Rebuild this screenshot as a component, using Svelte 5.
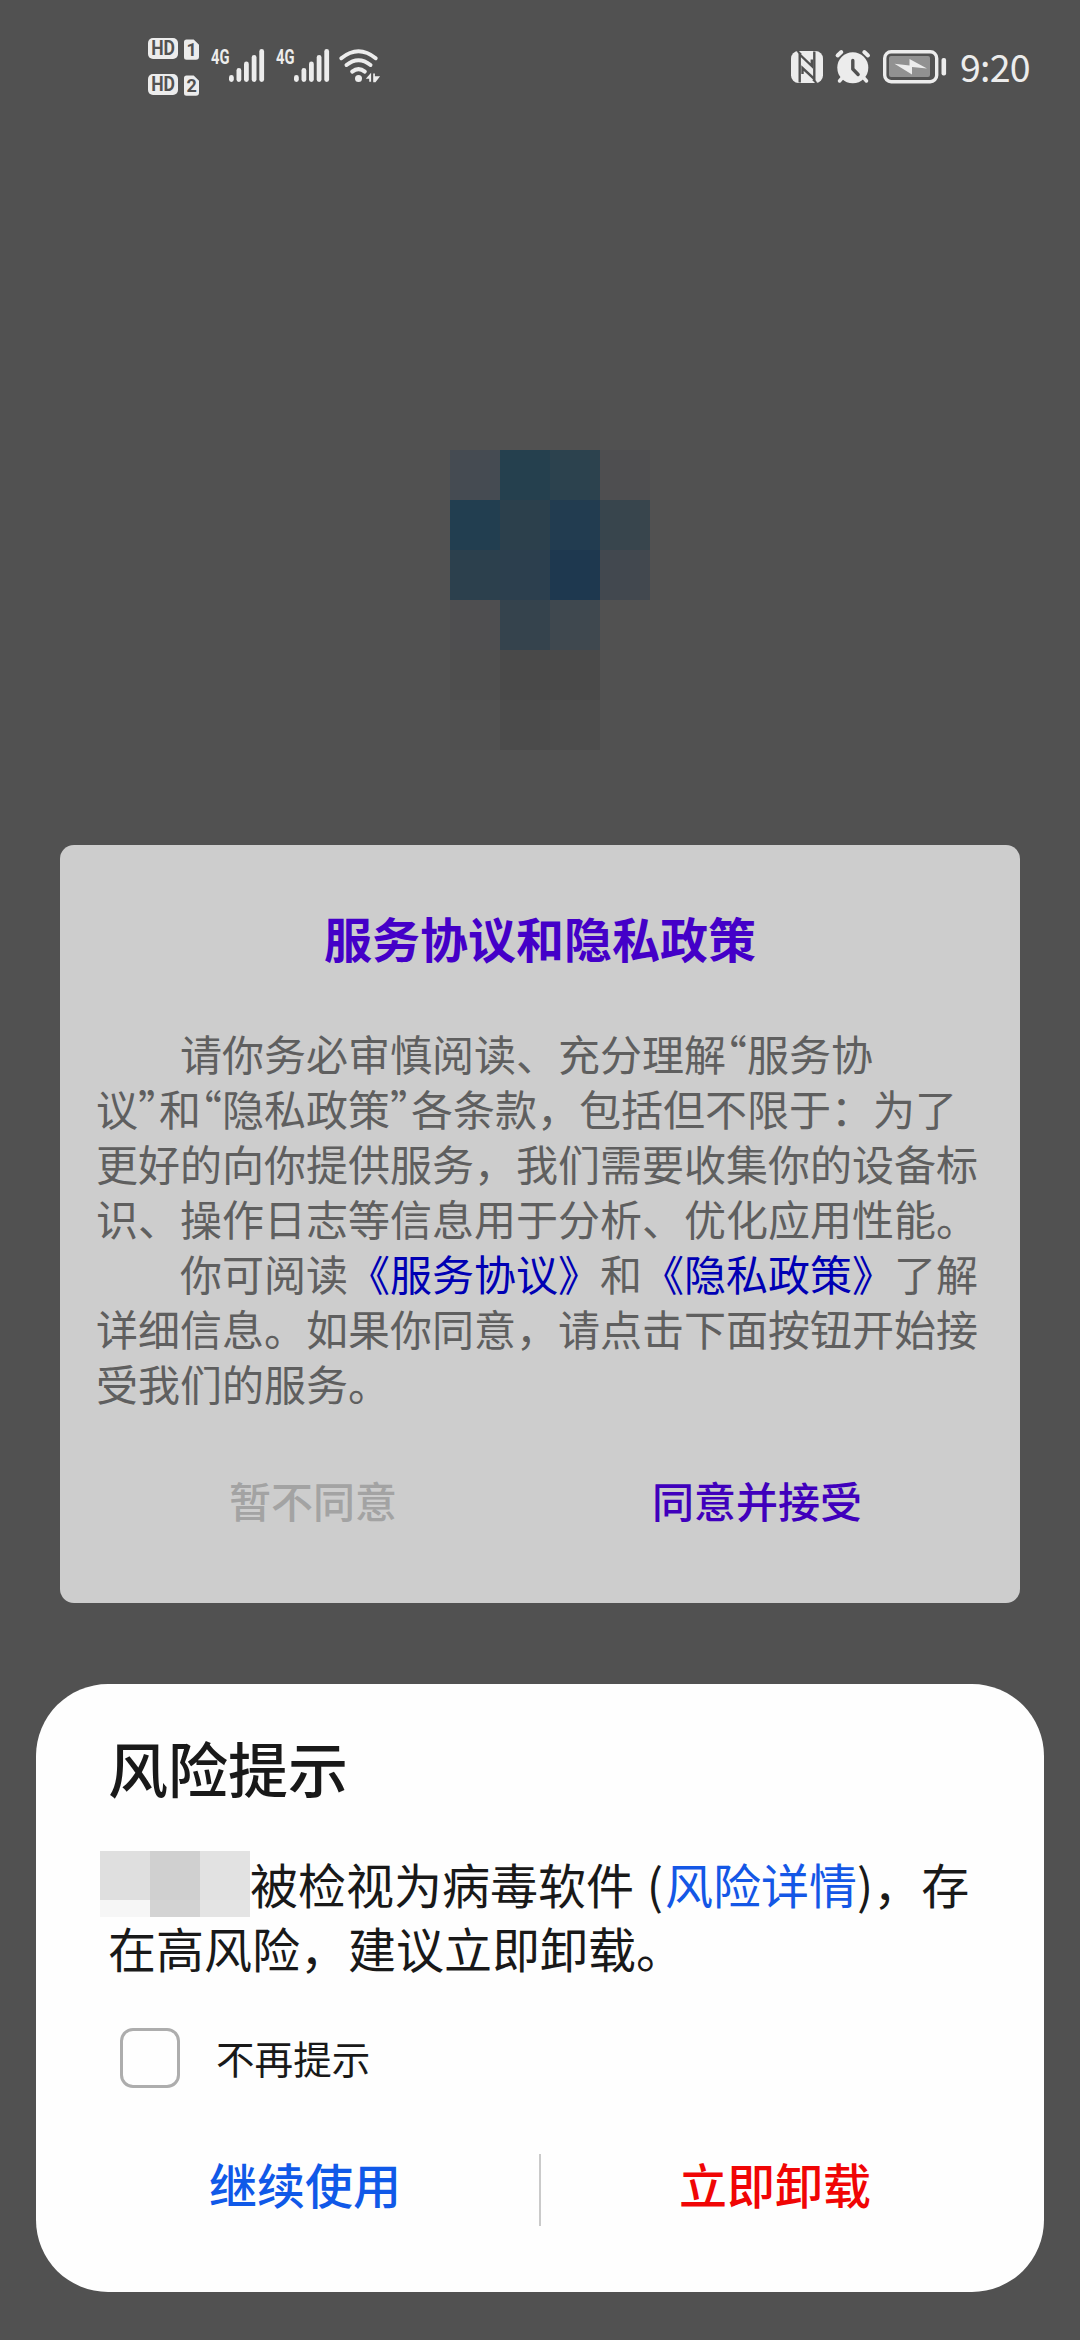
<script>
    const sims = [1, 2]

    const bars = [
        { x: 18, h: 7 },
        { x: 25.5, h: 14 },
        { x: 33, h: 20.5 },
        { x: 40.7, h: 27 },
        { x: 48.3, h: 33 }
    ]

    const logo = [
        '#515151', '#515151', '#505050', '#515151',
        '#454b52', '#25404e', '#2c424e', '#4e4e50',
        '#223e50', '#2c404c', '#223c50', '#38454d',
        '#2c404d', '#2c3f4e', '#1e384f', '#42484f',
        '#4e4e50', '#35434d', '#3f484f', '#515151',
        '#4e4e4e', '#494949', '#494949', '#515151',
        '#505050', '#4b4b4b', '#4c4c4c', '#515151'
    ]

    let noRemind = false
</script>

<div class="screen">
    <header class="status">
        <div class="left">
            <div class="hd-list">
                {#each sims as n}
                    <svg width="52" height="22" viewBox="0 0 52 22">
                        <rect x="0" y="0" width="30" height="21" rx="5" fill="#ececec" />
                        <text x="3.2" y="17.2" class="badge" textLength="23.8" lengthAdjust="spacingAndGlyphs">HD</text>
                        <path d="M38.5 1.5h7.2l5.3 5.3v12a3 3 0 0 1-3 3h-9.5a2.5 2.5 0 0 1-2.5-2.5v-15.3a2.5 2.5 0 0 1 2.500-2.500z" fill="#ececec" />
                        <text x="43.6" y="18" class="badge num" text-anchor="middle">{n}</text>
                    </svg>
                {/each}
            </div>
            {#each sims as n}
                <svg class="signal" width="54" height="34" viewBox="0 0 54 34">
                    <text x="0" y="15.3" class="net" textLength="18.5" lengthAdjust="spacingAndGlyphs">4G</text>
                    {#each bars as bar}
                        <rect x={bar.x} y={33 - bar.h} width="4.8" height={bar.h} rx="2.4" fill="#ececec" />
                    {/each}
                </svg>
            {/each}
            <svg class="wifi" width="42" height="34" viewBox="0 0 42 34">
                <g fill="none" stroke="#ececec" stroke-width="4" stroke-linecap="round">
                    <path d="M2.3 9.2q17.2-14 34.4 0" />
                    <path d="M7.5 16q12-9.5 24 0" />
                    <path d="M13.2 22.6q6.3-5 12.6 0" />
                </g>
                <circle cx="19.500" cy="29.500" r="3.500" fill="#ececec" />
                <path d="M26.800 29.700l5.300-6v9h-1.900v-3zM34.200 24.500h1.700v2.700h5.200l-4.600 6h-2.300z" fill="#ececec" />
            </svg>
        </div>
        <div class="right">
            <svg width="32" height="32" viewBox="0 0 32 32">
                <rect width="32" height="32" rx="7.5" fill="#ececec" />
                <g fill="none" stroke="#515151" stroke-width="2.4">
                    <path d="M8.700 31.500V3.500L20.800 15V8.500" />
                    <path d="M23.300 .5V28L11.500 17V23" />
                </g>
                <path d="M6.500 0l3.500 3.500M25.500 32l-3.500-3.500" stroke="#515151" stroke-width="2" />
            </svg>
            <svg class="alarm" width="36" height="34" viewBox="0 0 36 34">
                <g stroke="#ececec" stroke-linecap="round" fill="none">
                    <path d="M2.600 5.500l3.700-3.500M33 5.500l-3.700-3.500" stroke-width="4" />
                    <path d="M8 27l-3.500 4M28 27l3.500 4" stroke-width="3.500" />
                </g>
                <circle cx="17.800" cy="17.800" r="15.500" fill="#ececec" />
                <path d="M17.800 10.500v8.500l5.300 5.500" fill="none" stroke="#515151" stroke-width="3.400" stroke-linecap="round" stroke-linejoin="round" />
            </svg>
            <svg class="battery" width="64" height="34" viewBox="0 0 64 34">
                <rect x="1.700" y="1.700" width="52" height="30" rx="6.500" fill="none" stroke="#ececec" stroke-width="3.400" />
                <rect x="6" y="6" width="41" height="21" rx="2" fill="#919191" />
                <path d="M11.500 13.800l15 1.700v-6.500l17.500 9.500l-15-1.500v7.500z" fill="#ececec" />
                <rect x="58.500" y="8" width="4.600" height="17.500" rx="2" fill="#ececec" />
            </svg>
            <span class="clock">9:20</span>
        </div>
    </header>

    <div class="logo">
        {#each logo as color}
            <i style="background: {color}"></i>
        {/each}
    </div>

    <section class="policy">
        <h2>服务协议和隐私政策</h2>
        <div class="text">
            <p class="indent">请你务必审慎阅读、充分理解<q>“</q>服务协</p>
            <p>议<q>”</q>和<q>“</q>隐私政策<q>”</q>各条款，包括但不限于：为了</p>
            <p>更好的向你提供服务，我们需要收集你的设备标</p>
            <p>识、操作日志等信息用于分析、优化应用性能。</p>
            <p class="indent">你可阅读<span class="link">《服务协议》</span>和<span class="link">《隐私政策》</span>了解</p>
            <p>详细信息。如果你同意，请点击下面按钮开始接</p>
            <p>受我们的服务。</p>
        </div>
        <div class="actions">
            <button class="refuse">暂不同意</button>
            <button class="agree">同意并接受</button>
        </div>
    </section>

    <section class="risk">
        <h1>风险提示</h1>
        <div class="message">
            <div class="row">
                <div class="app-name"><i></i><i></i><i></i><i></i><i></i><i></i></div>
                <p>被检视为病毒软件<span class="open">{' ('}</span><span class="detail">风险详情</span>)，存</p>
            </div>
            <p class="second">在高风险，建议立即卸载。</p>
        </div>
        <label>
            <input type="checkbox" bind:checked={noRemind}>
            <span>不再提示</span>
        </label>
        <div class="choices">
            <button class="keep">继续使用</button>
            <span class="divider"></span>
            <button class="remove">立即卸载</button>
        </div>
    </section>
</div>

<style>
    :global(body) {
        background: #515151;
    }

    .screen {
        width: 1080px;
        height: 2340px;
        overflow: hidden;
        display: flex;
        flex-direction: column;
        background: #515151;
        font-family: "Noto Sans CJK SC", sans-serif;
        text-spacing-trim: space-all;
    }

    h1, h2, p {
        margin: 0;
        white-space: nowrap;
    }

    svg {
        display: block;
        flex: none;
        overflow: visible;
    }

    button {
        border: 0;
        padding: 0;
        background: none;
        font-family: inherit;
        font-weight: 500;
    }

    /* status bar */

    .status {
        height: 133px;
        flex: none;
        box-sizing: border-box;
        padding: 38px 49px 0 148px;
        display: flex;
        justify-content: space-between;
        align-items: flex-start;
    }

    .left, .right {
        display: flex;
        align-items: flex-start;
    }

    .hd-list {
        display: flex;
        flex-direction: column;
        gap: 14px;
        margin-right: 11px;
    }

    .badge {
        font: bold 19.5px Roboto, sans-serif;
        fill: #515151;
    }

    .num {
        font-size: 18px;
    }

    .net {
        font: bold 21px Roboto, sans-serif;
        fill: #ececec;
    }

    .signal {
        margin: 11px 11px 0 0;
    }

    .wifi {
        margin: 11px 0 0 -2px;
    }

    .right {
        padding-top: 12px;
    }

    .right > svg:first-child {
        margin-top: 1px;
    }

    .alarm {
        margin-left: 12px;
    }

    .battery {
        margin-left: 12px;
    }

    .clock {
        margin-left: 13px;
        margin-top: -2px;
        width: 71px;
        font-size: 37.5px;
        line-height: 36px;
        letter-spacing: -0.8px;
        color: #ececec;
        white-space: nowrap;
    }

    /* app logo */

    .logo {
        margin: 267px 0 0 450px;
        width: 200px;
        display: grid;
        grid-template-columns: repeat(4, 50px);
        grid-auto-rows: 50px;
    }

    /* policy card */

    .policy {
        flex: none;
        box-sizing: border-box;
        width: 960px;
        height: 758px;
        margin: 95px 60px 0;
        padding: 57px 36px 0;
        border-radius: 14px;
        background: #cdcdcd;
        color: #5f5f5f;
    }

    h2 {
        font-size: 48px;
        line-height: 70px;
        font-weight: 700;
        text-align: center;
        color: #4400c8;
    }

    .text {
        margin-top: 53px;
        font-size: 42px;
        line-height: 55px;
    }

    .indent {
        padding-left: 84px;
    }

    q {
        quotes: none;
        font-feature-settings: "halt";
    }

    .link {
        color: #0000b4;
    }

    .actions {
        display: flex;
        margin: 60px 5px 0 -5px;
    }

    .actions button {
        flex: 1;
        font-size: 42px;
        line-height: 60px;
    }

    .refuse {
        color: #a3a3a3;
    }

    .agree {
        color: #4000bc;
    }

    /* risk sheet */

    .risk {
        flex: none;
        box-sizing: border-box;
        width: 1008px;
        height: 608px;
        margin: 81px 36px 0;
        padding: 43px 0 0;
        border-radius: 72px;
        background: #fefefe;
        color: #191919;
    }

    h1 {
        margin-left: 72px;
        font-size: 60px;
        line-height: 80px;
        font-weight: 500;
    }

    .message {
        margin: 44px 0 0 64px;
        font-size: 48px;
        line-height: 63px;
    }

    .row {
        display: flex;
        height: 65px;
    }

    .row p {
        padding-top: 1px;
    }

    .app-name {
        display: grid;
        grid-template-columns: repeat(3, 50px);
        grid-template-rows: 49px 17px;
    }

    .app-name i:nth-child(1) { background: #dfdfdf; }
    .app-name i:nth-child(2) { background: #d0d0d0; }
    .app-name i:nth-child(3) { background: #e2e2e2; }
    .app-name i:nth-child(4) { background: #f6f6f6; }
    .app-name i:nth-child(5) { background: #d3d3d3; }
    .app-name i:nth-child(6) { background: #e4e4e4; }

    .open {
        letter-spacing: 2px;
    }

    .detail {
        color: #1457e6;
    }

    .second {
        margin-left: 8px;
    }

    label {
        display: flex;
        align-items: center;
        gap: 36px;
        height: 60px;
        margin: 49px 0 0 84px;
        font-size: 38.6px;
    }

    label span {
        padding-bottom: 2px;
    }

    input {
        appearance: none;
        box-sizing: border-box;
        width: 60px;
        height: 60px;
        margin: 0;
        border: 3px solid #adadad;
        border-radius: 13px;
    }

    .choices {
        display: flex;
        align-items: center;
        margin-top: 59px;
        padding: 0 35px;
    }

    .choices button {
        flex: 1;
        padding-bottom: 14px;
        font-size: 48px;
        line-height: 72px;
    }

    .keep {
        color: #1059e8;
    }

    .remove {
        color: #f00505;
    }

    .divider {
        width: 2px;
        height: 72px;
        background: #cacaca;
    }
</style>
